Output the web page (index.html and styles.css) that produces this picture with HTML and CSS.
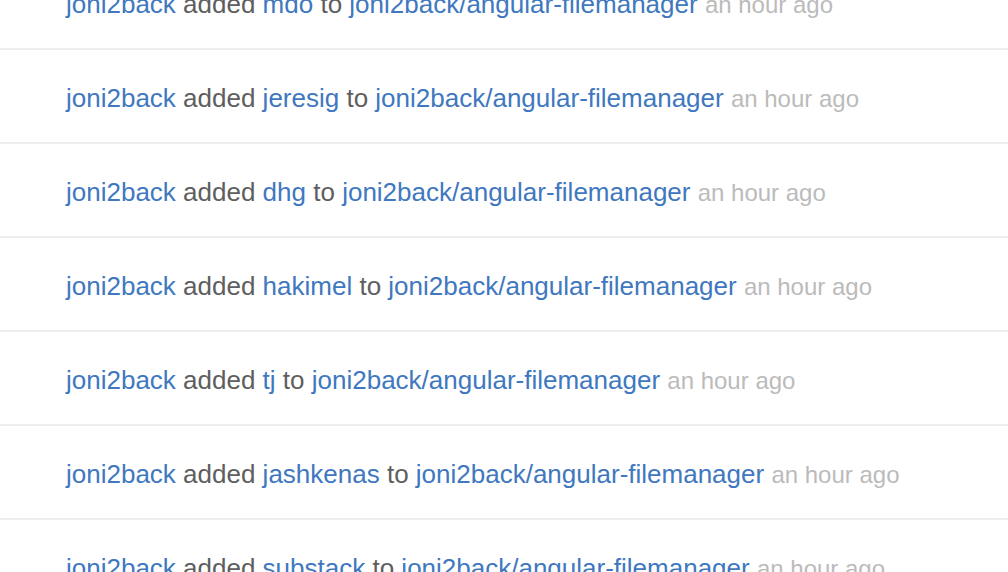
FILE: index.html
```html
<!DOCTYPE html>
<html>
<head>
<meta charset="utf-8">
<link rel="stylesheet" href="styles.css">
</head>
<body>
<ul class="feed">
  <li class="item"><a href="#">joni2back</a> added <a href="#">mdo</a> to <a href="#">joni2back/angular-filemanager</a> <span class="time">an hour ago</span></li>
  <li class="item"><a href="#">joni2back</a> added <a href="#">jeresig</a> to <a href="#">joni2back/angular-filemanager</a> <span class="time">an hour ago</span></li>
  <li class="item"><a href="#">joni2back</a> added <a href="#">dhg</a> to <a href="#">joni2back/angular-filemanager</a> <span class="time">an hour ago</span></li>
  <li class="item"><a href="#">joni2back</a> added <a href="#">hakimel</a> to <a href="#">joni2back/angular-filemanager</a> <span class="time">an hour ago</span></li>
  <li class="item"><a href="#">joni2back</a> added <a href="#">tj</a> to <a href="#">joni2back/angular-filemanager</a> <span class="time">an hour ago</span></li>
  <li class="item"><a href="#">joni2back</a> added <a href="#">jashkenas</a> to <a href="#">joni2back/angular-filemanager</a> <span class="time">an hour ago</span></li>
  <li class="item"><a href="#">joni2back</a> added <a href="#">substack</a> to <a href="#">joni2back/angular-filemanager</a> <span class="time">an hour ago</span></li>
</ul>
</body>
</html>
```
FILE: styles.css
```css
html, body {
  margin: 0;
  padding: 0;
  background: #fff;
  overflow: hidden;
}
.feed {
  list-style: none;
  margin: -44px 0 0 0;
  padding: 0;
  font-family: "Liberation Sans", Arial, sans-serif;
  font-size: 26px;
  line-height: 32px;
  color: #5e5e5e;
}
.item {
  height: 32px;
  padding: 32px 0 28px 66px;
  border-bottom: 2px solid #eee;
  white-space: nowrap;
}
.item a {
  color: #4078c0;
  text-decoration: none;
}
.time {
  color: #bbb;
  font-size: 24px;
  line-height: 20px;
}
```
